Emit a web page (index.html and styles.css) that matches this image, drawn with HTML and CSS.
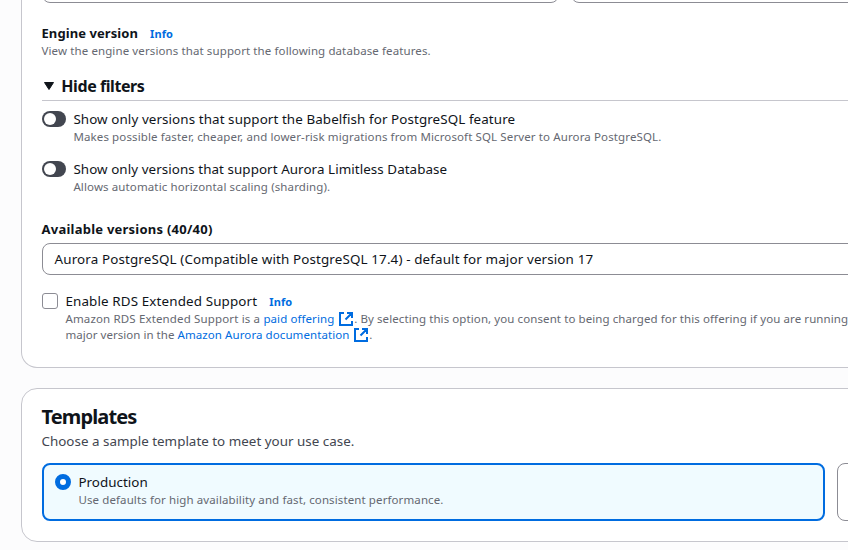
FILE: index.html
```html
<!DOCTYPE html>
<html lang="en">
<head>
<meta charset="utf-8">
<title>Create database</title>
<link rel="stylesheet" href="styles.css">
</head>
<body>
<main class="page">
  <section class="panel engine">
    <div class="fields">
      <div class="field"></div>
      <div class="field"></div>
    </div>
    <div class="heading-row">
      <span class="label engine-label">Engine version</span>
      <a class="info">Info</a>
    </div>
    <p class="hint view-hint">View the engine versions that support the following database features.</p>
    <div class="filters-head">
      <svg class="caret" viewBox="0 0 12 10" width="12" height="10"><path d="M1.5 1.5h9L6 8.5z" fill="#0f141a" stroke="#0f141a" stroke-width="1" stroke-linejoin="round"/></svg>
      <h3>Hide filters</h3>
    </div>
    <div class="option">
      <span class="toggle"></span>
      <div>
        <p class="text babelfish">Show only versions that support the Babelfish for PostgreSQL feature</p>
        <p class="hint migration">Makes possible faster, cheaper, and lower-risk migrations from Microsoft SQL Server to Aurora PostgreSQL.</p>
      </div>
    </div>
    <div class="option">
      <span class="toggle"></span>
      <div>
        <p class="text limitless">Show only versions that support Aurora Limitless Database</p>
        <p class="hint sharding">Allows automatic horizontal scaling (sharding).</p>
      </div>
    </div>
    <p class="label versions-label">Available versions (40/40)</p>
    <div class="select"><span class="text version">Aurora PostgreSQL (Compatible with PostgreSQL 17.4) - default for major version 17</span></div>
    <div class="option support">
      <span class="checkbox"></span>
      <div>
        <div class="heading-row"><span class="text extended">Enable RDS Extended Support</span><a class="info">Info</a></div>
        <p class="hint"><span class="amazon">Amazon RDS Extended Support is a </span><a class="link paid">paid offering</a><svg class="external" viewBox="0 0 14 14" width="14" height="14"><path d="M5 1H1v12h12V9M8 1h5v5M13 1L6.5 7.5"/></svg><span class="consent">. By selecting this option, you consent to being charged for this offering if you are running</span></p>
        <p class="hint"><span class="major">major version in the </span><a class="link docs">Amazon Aurora documentation</a><svg class="external" viewBox="0 0 14 14" width="14" height="14"><path d="M5 1H1v12h12V9M8 1h5v5M13 1L6.5 7.5"/></svg>.</p>
      </div>
    </div>
  </section>
  <section class="panel templates">
    <h2>Templates</h2>
    <p class="text choose">Choose a sample template to meet your use case.</p>
    <div class="cards">
      <div class="card selected">
        <span class="radio"></span>
        <div>
          <p class="text production">Production</p>
          <p class="hint defaults">Use defaults for high availability and fast, consistent performance.</p>
        </div>
      </div>
      <div class="card"></div>
    </div>
  </section>
</main>
</body>
</html>
```
FILE: styles.css
```css
* { box-sizing: border-box; }
body {
  margin: 0;
  height: 550px;
  overflow: hidden;
  background: #fcfcfd;
  color: #0f141a;
  font-family: "Noto Sans", sans-serif;
}
p, h2, h3 { margin: 0; white-space: nowrap; }
.page { display: flex; flex-direction: column; gap: 20px; width: 100%; height: 550px; padding-left: 21px; overflow: hidden; }
.panel { flex: none; width: 1619px; background: #fff; border: 1px solid #c6c6cd; border-radius: 16px; padding: 0 20px; }
.engine { height: 368px; border-top: 0; border-radius: 0 0 16px 16px; }
.templates { height: 154px; padding-top: 16px; }

.fields { display: flex; gap: 12px; height: 3px; margin-bottom: 20px; overflow: hidden; align-items: flex-end; }
.field { flex: none; width: 517px; height: 32px; border: 1px solid #8c8c94; border-radius: 8px; }
.field + .field { width: 800px; }

.heading-row { display: flex; gap: 12px; height: 20px; }
.label { font-size: 13px; font-weight: 700; line-height: 20px; }
.text { font-size: 13.4px; line-height: 20px; }
.hint { font-size: 11.5px; line-height: 16px; height: 16px; color: #656871; letter-spacing: .11px; }
.info { font-size: 11px; font-weight: 700; line-height: 21px; letter-spacing: .1px; color: #006ce0; }
.link { color: #006ce0; }
.engine-label, .view-hint, .versions-label, h2, .choose { margin-left: -.5px; }

.filters-head { display: flex; align-items: center; height: 25px; margin: 17px 0 8px; padding-bottom: 4px; border-bottom: 1px solid #c6c6cd; }
.caret { margin: 0 7px 0 1px; }
h3 { font-size: 16px; line-height: 20px; letter-spacing: -.44px; margin-left: -.7px; }

.option { display: flex; gap: 7.4px; margin-bottom: 14px; }
.toggle { flex: none; width: 24px; height: 16px; margin-top: 2px; padding: 2px; border-radius: 8px; background: #424650; }
.toggle::before { content: ""; display: block; width: 12px; height: 12px; border-radius: 50%; background: #fff; }
.versions-label { margin-top: 24px; letter-spacing: .24px; }
.select { height: 32px; margin-top: 4px; padding: 5px 11.6px; border: 1px solid #8c8c94; border-radius: 8px; white-space: nowrap; display: flex; }
.support { margin-top: 16px; }
.checkbox { flex: none; width: 16px; height: 16px; margin-top: 2px; border: 1px solid #8c8c94; border-radius: 3px; }
.external { display: inline-block; margin-left: 4.4px; margin-right: 1.4px; vertical-align: -3px; fill: none; stroke: #006ce0; stroke-width: 2; }

h2 { font-size: 20px; line-height: 24px; letter-spacing: -.87px; }
.choose { margin-top: 2px; color: #424650; letter-spacing: .01px; }
.cards { display: flex; gap: 12px; margin-top: 12px; }
.card { flex: none; display: flex; gap: 7.4px; width: 783px; height: 58px; border: 1px solid #8c8c94; border-radius: 8px; }
.selected { border: 2px solid #006ce0; background: #f0fbff; padding: 7px 11px; }
.radio { flex: none; width: 16px; height: 16px; margin-top: 2px; border: 5px solid #006ce0; border-radius: 50%; background: #fff; }

.engine-label { letter-spacing: .08px; }
.babelfish { letter-spacing: .09px; }
.migration { letter-spacing: .12px; }
.limitless { letter-spacing: .065px; }
.sharding { letter-spacing: .12px; }
.version { letter-spacing: .135px; }
.extended { letter-spacing: .137px; }
.amazon { letter-spacing: .15px; }
.paid, .consent { letter-spacing: .09px; }
.major { letter-spacing: .04px; }
.docs { letter-spacing: .085px; }
.production { letter-spacing: .03px; }
```
